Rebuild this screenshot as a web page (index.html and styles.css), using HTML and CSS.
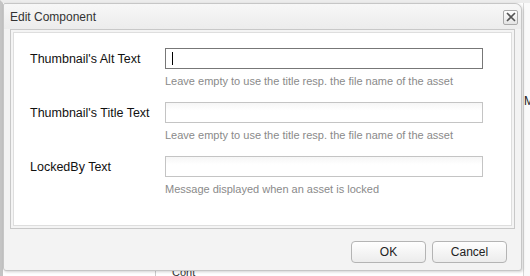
FILE: index.html
```html
<!DOCTYPE html>
<html lang="en">
<head>
  <meta charset="UTF-8" />
  <title>Edit Component</title>
  <link rel="stylesheet" href="styles.css">
</head>

<body>

  <div class="backdrop">
    <div class="side-col">
      <span class="side-letter">M</span>
    </div>
    <div class="bottom-strip">
      <span class="bottom-text">Cont</span>
    </div>
  </div>

  <div class="dialog">
    <div class="dialog-title">
      <span>Edit Component</span>
      <span class="close-btn">
        <svg width="10" height="10" viewBox="0 0 10 10">
          <path d="M1 1 L9 9 M9 1 L1 9" stroke="#555" stroke-width="1.6" fill="none"/>
        </svg>
      </span>
    </div>

    <div class="dialog-body">
      <div class="form-panel">
        <div class="form-row">
          <label class="field-label">Thumbnail's Alt Text</label>
          <div class="field">
            <div class="text-input focused"><span class="caret"></span></div>
            <div class="field-help">Leave empty to use the title resp. the file name of the asset</div>
          </div>
        </div>

        <div class="form-row">
          <label class="field-label">Thumbnail's Title Text</label>
          <div class="field">
            <div class="text-input"></div>
            <div class="field-help">Leave empty to use the title resp. the file name of the asset</div>
          </div>
        </div>

        <div class="form-row">
          <label class="field-label">LockedBy Text</label>
          <div class="field">
            <div class="text-input"></div>
            <div class="field-help">Message displayed when an asset is locked</div>
          </div>
        </div>
      </div>
    </div>

    <div class="dialog-footer">
      <button class="btn">OK</button>
      <button class="btn">Cancel</button>
    </div>
  </div>

</body>
</html>
```

FILE: styles.css
```css
body {
  margin: 0;
  width: 530px;
  height: 276px;
  overflow: hidden;
  font-family: "Liberation Sans", Arial, sans-serif;
  background: #fff;
  position: relative;
}

/* Seite hinter dem Dialog */
.backdrop {
  position: absolute;
  inset: 0;
  border-left: 3px solid #c4c4c4;
  border-top: 3px solid #ececec;
}

.side-col {
  position: absolute;
  top: 0;
  right: 0;
  width: 6px;
  height: 100%;
  border-left: 1px solid #d8d8d8;
  background: #fafafa;
}

.side-letter {
  position: absolute;
  top: 91px;
  left: 0;
  font-size: 12px;
  color: #222;
}

.bottom-strip {
  position: absolute;
  left: 152px;
  right: 0;
  bottom: 0;
  height: 5px;
  border-left: 1px solid #ccc;
}

.bottom-text {
  position: absolute;
  left: 16px;
  top: -5px;
  font-size: 11px;
  color: #333;
}

/* Dialog */
.dialog {
  position: absolute;
  top: 3px;
  left: 3px;
  width: 517px;
  height: 266px;
  display: flex;
  flex-direction: column;
  background: #f3f3f3;
  border: 1px solid #c6c6c6;
  border-radius: 2px 7px 3px 3px;
  box-shadow: 1px 1px 3px rgba(0,0,0,0.18);
}

.dialog-title {
  height: 25px;
  display: flex;
  align-items: center;
  justify-content: space-between;
  padding: 0 3px 0 6px;
  font-size: 12px;
  color: #333;
  background: linear-gradient(#f7f7f7, #ececec);
  border-radius: 2px 7px 0 0;
}

.close-btn {
  width: 13px;
  height: 13px;
  display: flex;
  align-items: center;
  justify-content: center;
  border: 1px solid #aaa;
  border-radius: 2px;
  background: linear-gradient(#fff, #e4e4e4);
  margin-top: 1px;
}

.dialog-body {
  padding: 0 6px 0 6px;
}

.form-panel {
  height: 180px;
  background: #fff;
  border: 1px solid #c8c8c8;
  box-shadow: inset 0 0 0 2px #f4f4f4, inset 0 0 0 3px #dedede;
  padding: 18px 30px 0 19px;
}

.form-row {
  display: flex;
  margin-bottom: 11px;
}

.field-label {
  width: 135px;
  flex: none;
  font-size: 12.5px;
  color: #111;
  line-height: 22px;
}

.text-input {
  width: 316px;
  height: 19px;
  border: 1px solid #c4c4c4;
  background: linear-gradient(#f6f6f6, #fff 40%);
  display: flex;
  align-items: center;
}

.text-input.focused {
  border-color: #777;
  background: #fff;
}

.caret {
  width: 1px;
  height: 13px;
  margin-left: 6px;
  background: #000;
}

.field-help {
  margin-top: 6px;
  font-size: 11px;
  color: #8a8a8a;
  height: 16px;
}

.dialog-footer {
  flex: 1;
  display: flex;
  justify-content: flex-end;
  align-items: flex-end;
  gap: 6px;
  padding: 0 14px 7px 0;
}

.btn {
  width: 75px;
  height: 22px;
  font-family: "Liberation Sans", Arial, sans-serif;
  font-size: 12px;
  color: #222;
  border: 1px solid #b4b4b4;
  border-radius: 4px;
  background: linear-gradient(#fefefe, #ececec);
  cursor: pointer;
}
```
